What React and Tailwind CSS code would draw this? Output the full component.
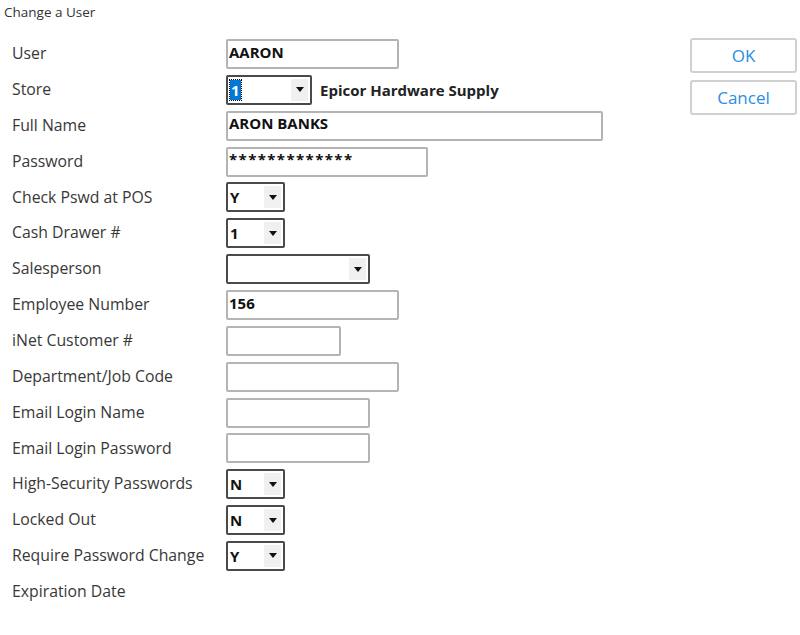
const FONT = "font-['Open_Sans','Noto_Sans',sans-serif]";

function TextBox({ width, value, stars }) {
  return (
    <div
      className={`flex h-[30px] items-center rounded-[2px] border-2 border-[#b4b4b4] bg-white pb-[4px] pl-[1px] text-[15px] font-bold text-[#111] ${stars ? "tracking-[1.4px]" : ""}`}
      style={{ width }}
    >
      {value}
    </div>
  );
}

function DropDown({ width, value, selected }) {
  return (
    <div
      className="flex h-[30px] items-center justify-between rounded-[2px] border-2 border-[#4a4a4a] bg-white pl-[2px] pr-[2px] text-[15px] font-bold text-[#111]"
      style={{ width }}
    >
      <span
        className={
          selected
            ? "bg-[#0078d7] px-[1px] leading-[20px] text-white outline outline-1 outline-dotted outline-black"
            : ""
        }
      >
        {value}
      </span>
      <span className="flex h-[22px] w-[17px] items-center justify-center bg-[#f0f0f0]">
        <svg width="8" height="5" viewBox="0 0 8 5">
          <path d="M0 0h8L4 5z" fill="#111" />
        </svg>
      </span>
    </div>
  );
}

const rows = [
  { label: "User", field: <TextBox width={173} value="AARON" /> },
  {
    label: "Store",
    field: (
      <div className="flex items-center gap-[8px]">
        <DropDown width={86} value="1" selected />
        <span className="text-[15px] font-bold text-[#222]">Epicor Hardware Supply</span>
      </div>
    ),
  },
  { label: "Full Name", field: <TextBox width={377} value="ARON BANKS" /> },
  { label: "Password", field: <TextBox width={202} value="*************" stars /> },
  { label: "Check Pswd at POS", field: <DropDown width={59} value="Y" /> },
  { label: "Cash Drawer #", field: <DropDown width={59} value="1" /> },
  { label: "Salesperson", field: <DropDown width={144} value="" /> },
  { label: "Employee Number", field: <TextBox width={173} value="156" /> },
  { label: "iNet Customer #", field: <TextBox width={115} value="" /> },
  { label: "Department/Job Code", field: <TextBox width={173} value="" /> },
  { label: "Email Login Name", field: <TextBox width={144} value="" /> },
  { label: "Email Login Password", field: <TextBox width={144} value="" /> },
  { label: "High-Security Passwords", field: <DropDown width={59} value="N" /> },
  { label: "Locked Out", field: <DropDown width={59} value="N" /> },
  { label: "Require Password Change", field: <DropDown width={59} value="Y" /> },
  { label: "Expiration Date", field: null },
];

export default function App() {
  return (
    <div className={`h-[635px] w-[800px] overflow-hidden bg-white ${FONT}`}>
      <div className="h-[36px] pl-[4px] pt-[3px] text-[13.5px] leading-[18px] text-[#333]">
        Change a User
      </div>
      <div className="flex">
        <div className="flex flex-1 flex-col">
          {rows.map((r) => (
            <div key={r.label} className="flex h-[35.87px] items-center">
              <div className="w-[226px] pl-[12px] text-[15.8px] text-[#383838]">{r.label}</div>
              {r.field}
            </div>
          ))}
        </div>
        <div className="mr-[3px] mt-[2px] flex w-[107px] flex-col gap-[7px]">
          <button className="h-[35px] rounded-[3px] border-2 border-[#d0d0d0] bg-white text-[17px] text-[#2a8ee0]">
            OK
          </button>
          <button className="h-[35px] rounded-[3px] border-2 border-[#d0d0d0] bg-white text-[17px] text-[#2a8ee0]">
            Cancel
          </button>
        </div>
      </div>
    </div>
  );
}
